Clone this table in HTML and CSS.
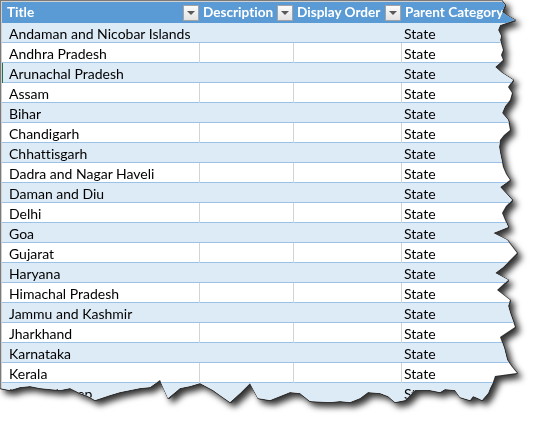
FILE: index.html
```html
<!DOCTYPE html>
<html>
<head>
<meta charset="utf-8">
<link rel="stylesheet" href="styles.css">
</head>
<body>
<div class="frame">
  <div class="sheet">
    <div class="grid">
      <div class="row head">
        <div class="cell"><span>Title</span><span class="dd"></span></div>
        <div class="cell"><span>Description</span><span class="dd"></span></div>
        <div class="cell"><span>Display Order</span><span class="dd"></span></div>
        <div class="cell"><span>Parent Category</span></div>
      </div>
      <div class="row band"><div class="cell">Andaman and Nicobar Islands</div><div class="cell"></div><div class="cell"></div><div class="cell">State</div></div>
      <div class="row"><div class="cell">Andhra Pradesh</div><div class="cell"></div><div class="cell"></div><div class="cell">State</div></div>
      <div class="row band sel"><div class="cell">Arunachal Pradesh</div><div class="cell"></div><div class="cell"></div><div class="cell">State</div></div>
      <div class="row"><div class="cell">Assam</div><div class="cell"></div><div class="cell"></div><div class="cell">State</div></div>
      <div class="row band"><div class="cell">Bihar</div><div class="cell"></div><div class="cell"></div><div class="cell">State</div></div>
      <div class="row"><div class="cell">Chandigarh</div><div class="cell"></div><div class="cell"></div><div class="cell">State</div></div>
      <div class="row band"><div class="cell">Chhattisgarh</div><div class="cell"></div><div class="cell"></div><div class="cell">State</div></div>
      <div class="row"><div class="cell">Dadra and Nagar Haveli</div><div class="cell"></div><div class="cell"></div><div class="cell">State</div></div>
      <div class="row band"><div class="cell">Daman and Diu</div><div class="cell"></div><div class="cell"></div><div class="cell">State</div></div>
      <div class="row"><div class="cell">Delhi</div><div class="cell"></div><div class="cell"></div><div class="cell">State</div></div>
      <div class="row band"><div class="cell">Goa</div><div class="cell"></div><div class="cell"></div><div class="cell">State</div></div>
      <div class="row"><div class="cell">Gujarat</div><div class="cell"></div><div class="cell"></div><div class="cell">State</div></div>
      <div class="row band"><div class="cell">Haryana</div><div class="cell"></div><div class="cell"></div><div class="cell">State</div></div>
      <div class="row"><div class="cell">Himachal Pradesh</div><div class="cell"></div><div class="cell"></div><div class="cell">State</div></div>
      <div class="row band"><div class="cell">Jammu and Kashmir</div><div class="cell"></div><div class="cell"></div><div class="cell">State</div></div>
      <div class="row"><div class="cell">Jharkhand</div><div class="cell"></div><div class="cell"></div><div class="cell">State</div></div>
      <div class="row band"><div class="cell">Karnataka</div><div class="cell"></div><div class="cell"></div><div class="cell">State</div></div>
      <div class="row"><div class="cell">Kerala</div><div class="cell"></div><div class="cell"></div><div class="cell">State</div></div>
      <div class="row band"><div class="cell">Lakshadweep</div><div class="cell"></div><div class="cell"></div><div class="cell">State</div></div>
    </div>
  </div>
</div>
</body>
</html>
```
FILE: styles.css
```css
html, body {
  margin: 0;
  background: #ffffff;
}

.frame {
  width: 541px;
  height: 427px;
  filter: drop-shadow(1px 0 0 #333333) drop-shadow(0 1px 0 #333333) drop-shadow(4px 4px 3px rgba(0, 0, 0, 0.8));
}

.sheet {
  width: 541px;
  height: 410px;
  box-sizing: border-box;
  background: #ffffff;
  border-top: 1px solid #7a7a7a;
  border-left: 1px solid #7a7a7a;
  font-family: "Lato", "Liberation Sans", sans-serif;
  font-size: 14px;
  font-variant-ligatures: none;
  color: #000;
  clip-path: polygon(0 0, 501px 0, 505px 5px, 502px 12px, 508px 16px, 515px 20px, 500px 25px, 498px 30px, 501px 36px, 500px 40px, 503px 50px, 501px 55px, 503px 60px, 495px 67px, 502px 73px, 513px 80px, 508px 87px, 512px 93px, 510px 100px, 505px 106px, 502px 113px, 508px 120px, 510px 130px, 504px 135px, 500px 140px, 499px 147px, 500px 153px, 503px 167px, 506px 174px, 510px 180px, 500px 187px, 512px 200px, 506px 206px, 502px 213px, 508px 227px, 493px 233px, 507px 240px, 517px 253px, 503px 267px, 495px 273px, 508px 280px, 497px 290px, 510px 300px, 508px 306px, 510px 313px, 515px 327px, 500px 337px, 504px 348px, 507px 360px, 512px 367px, 517px 373px, 495px 376px, 493px 382px, 490px 388px, 488px 393px, 482px 400px, 478px 398px, 473px 396px, 470px 400px, 460px 397px, 455px 390px, 445px 389px, 440px 392px, 430px 390px, 415px 390px, 405px 400px, 395px 402px, 388px 396px, 380px 393px, 368px 392px, 360px 398px, 350px 402px, 340px 401px, 330px 402px, 310px 401px, 300px 393px, 290px 392px, 280px 396px, 270px 400px, 258px 398px, 250px 383px, 240px 393px, 230px 402px, 220px 395px, 213px 390px, 200px 383px, 190px 386px, 180px 388px, 168px 398px, 160px 380px, 150px 387px, 140px 388px, 130px 390px, 120px 392px, 110px 395px, 95px 400px, 88px 396px, 80px 393px, 70px 388px, 60px 390px, 50px 389px, 40px 388px, 30px 386px, 20px 387px, 10px 390px, 0 388px);
}

.grid {
  border-top: 1px solid #d0d0d0;
  border-left: 1px solid #d0d0d0;
}

.row {
  display: grid;
  grid-template-columns: 198px 94px 108px 1fr;
  height: 20px;
  box-sizing: border-box;
  border-bottom: 1px solid #9bc2e6;
}

.row.band {
  background: #ddebf7;
}

.cell {
  box-sizing: border-box;
  border-right: 1px solid #d4d4d4;
  padding-left: 2px;
  padding-top: 1px;
  line-height: 19px;
  white-space: nowrap;
  overflow: visible;
}

.row .cell:first-child {
  padding-left: 7px;
}

.row.band .cell {
  border-right-color: transparent;
}

.row.sel .cell:first-child {
  box-shadow: inset 1px 0 0 #217346;
}

.row.head {
  height: 21px;
  background: #5b9bd5;
  border-bottom: none;
  color: #ffffff;
  font-weight: bold;
  font-size: 13.6px;
}

.row.head .cell {
  display: flex;
  align-items: center;
  justify-content: space-between;
  border-right: none;
  padding-top: 0;
  padding-left: 3px;
  padding-right: 1px;
  line-height: 21px;
  overflow: hidden;
}

.row.head .cell:first-child {
  padding-left: 5px;
}

.dd {
  flex: none;
  width: 14px;
  height: 14px;
  border: 1px solid #a3a3a3;
  background: linear-gradient(#fbfbfb, #e3e3e3);
  display: flex;
  align-items: center;
  justify-content: center;
}

.dd::after {
  content: "";
  width: 0;
  height: 0;
  margin-top: 1px;
  border-left: 4px solid transparent;
  border-right: 4px solid transparent;
  border-top: 4px solid #595959;
}
```
